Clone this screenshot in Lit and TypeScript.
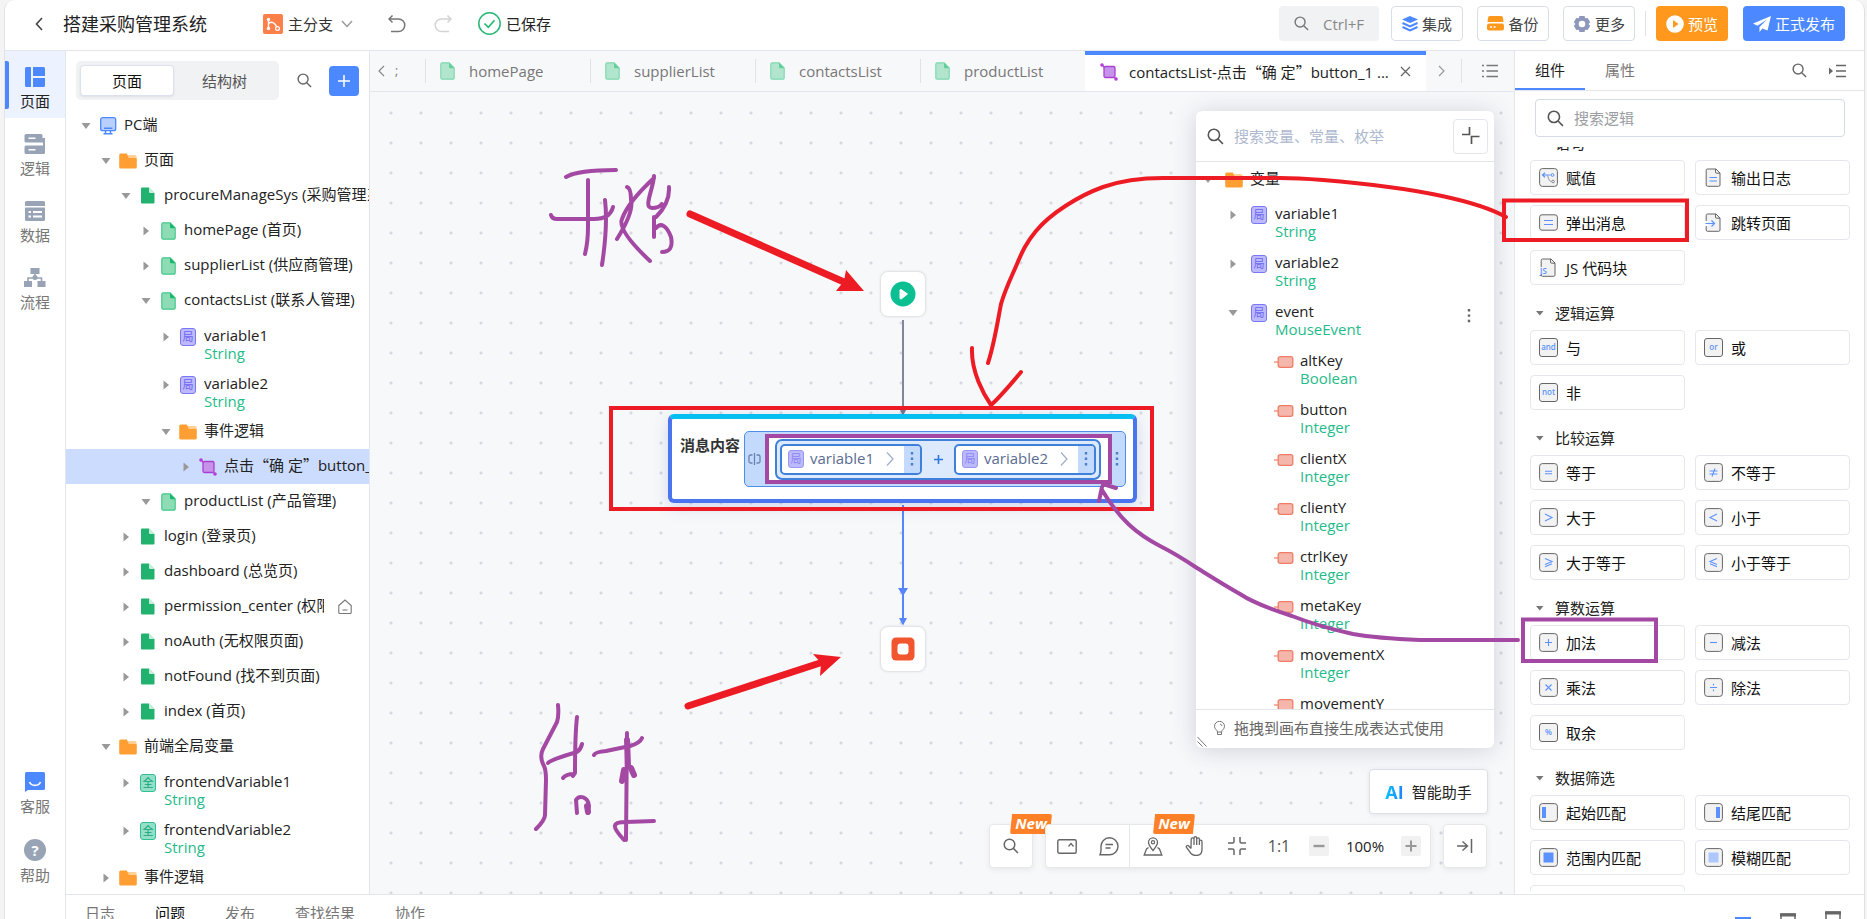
import { LitElement, html, css, svg, nothing, TemplateResult } from "lit";
import { customElement } from "lit/decorators.js";

type Row = { level: number; open?: boolean; leaf?: boolean; icon: string; text: any; type?: string; selected?: boolean; home?: boolean; menu?: boolean };

const quoted = (before: string, inner: string, after: string) =>
  html`${before}<span class="cjk open">“</span>${inner}<span class="cjk">”</span>${after}`;

const pageTree: Row[] = [
  { level: 0, open: true, icon: "pc", text: "PC端" },
  { level: 1, open: true, icon: "folder", text: "页面" },
  { level: 2, open: true, icon: "page", text: "procureManageSys (采购管理系统)" },
  { level: 3, icon: "view", text: "homePage (首页)" },
  { level: 3, icon: "view", text: "supplierList (供应商管理)" },
  { level: 3, open: true, icon: "view", text: "contactsList (联系人管理)" },
  { level: 4, icon: "local", text: "variable1", type: "String" },
  { level: 4, icon: "local", text: "variable2", type: "String" },
  { level: 4, open: true, icon: "folder", text: "事件逻辑" },
  { level: 5, icon: "logic", text: quoted("点击", "确 定", "button_1"), selected: true },
  { level: 3, open: true, icon: "view", text: "productList (产品管理)" },
  { level: 2, icon: "page", text: "login (登录页)" },
  { level: 2, icon: "page", text: "dashboard (总览页)" },
  { level: 2, icon: "page", text: "permission_center (权限中心)", home: true },
  { level: 2, icon: "page", text: "noAuth (无权限页面)" },
  { level: 2, icon: "page", text: "notFound (找不到页面)" },
  { level: 2, icon: "page", text: "index (首页)" },
  { level: 1, open: true, icon: "folder", text: "前端全局变量" },
  { level: 2, icon: "global", text: "frontendVariable1", type: "String" },
  { level: 2, icon: "global", text: "frontendVariable2", type: "String" },
  { level: 1, icon: "folder", text: "事件逻辑" },
];

const variableTree: Row[] = [
  { level: 0, open: true, icon: "folder", text: "变量" },
  { level: 1, icon: "local", text: "variable1", type: "String" },
  { level: 1, icon: "local", text: "variable2", type: "String" },
  { level: 1, open: true, icon: "local", text: "event", type: "MouseEvent", menu: true },
  ...[["altKey", "Boolean"], ["button", "Integer"], ["clientX", "Integer"], ["clientY", "Integer"], ["ctrlKey", "Integer"],
    ["metaKey", "Integer"], ["movementX", "Integer"], ["movementY", "Integer"]].map(
    ([text, type]) => ({ level: 2, leaf: true, icon: "field", text, type })),
];

const groups: { title: string; items: [string, string][] }[] = [
  { title: "语句", items: [["assign", "赋值"], ["log", "输出日志"], ["message", "弹出消息"], ["jump", "跳转页面"], ["js", "JS 代码块"]] },
  { title: "逻辑运算", items: [["and", "与"], ["or", "或"], ["not", "非"]] },
  { title: "比较运算", items: [["eq", "等于"], ["ne", "不等于"], ["gt", "大于"], ["lt", "小于"], ["ge", "大于等于"], ["le", "小于等于"]] },
  { title: "算数运算", items: [["add", "加法"], ["sub", "减法"], ["mul", "乘法"], ["div", "除法"], ["mod", "取余"]] },
  { title: "数据筛选", items: [["start", "起始匹配"], ["end", "结尾匹配"], ["range", "范围内匹配"], ["fuzzy", "模糊匹配"], ["blank", ""]] },
];

const icon = (w: number, h: number, body: TemplateResult | any) =>
  html`<svg width=${w} height=${h} viewBox="0 0 ${w} ${h}" fill="none" aria-hidden="true">${body}</svg>`;

const magnifier = (size: number, color = "#666") =>
  html`<svg width=${size} height=${size} viewBox="0 0 16 16" fill="none" stroke=${color} stroke-width="1.5" aria-hidden="true">
    <circle cx="6.5" cy="6.5" r="5.3"></circle><path d="M10.4 10.4L15 15"></path></svg>`;

const treeIcons: Record<string, () => TemplateResult> = {
  pc: () => icon(18, 18, svg`<rect x="1.7" y=".7" width="15" height="13" rx="2" fill="#b9d0ff" stroke="#4c88ff" stroke-width="1.3"/><path d="M5 11.2h8.400M6.500 14v2M11.500 14v2M4.500 16.700h9" stroke="#4c88ff" stroke-width="1.400"/>`),
  folder: () => icon(18, 16, svg`<path d="M8 2h8a1.600 1.600 0 0 1 1.600 1.600V8H8z" fill="#ffcf94"/><path d="M1.600.5h6.200l2 4.500h6.600A1.400 1.400 0 0 1 17.800 6.400v7.600a1.500 1.500 0 0 1-1.500 1.500H1.700A1.500 1.500 0 0 1 .2 14V2A1.500 1.500 0 0 1 1.600.5z" fill="#ff9f33"/>`),
  page: () => icon(14, 17, svg`<path d="M1 .5h7l5.500 5.500v9.500a1 1 0 0 1-1 1H1a1 1 0 0 1-1-1v-14a1 1 0 0 1 1-1z" fill="#22b26f"/><path d="M8 .5L13.500 6H9a1 1 0 0 1-1-1z" fill="#c9eedb"/>`),
  view: () => icon(15, 18, svg`<path d="M2.200.8h7L14.200 6v9.800a1.400 1.400 0 0 1-1.400 1.400H2.200A1.400 1.400 0 0 1 .8 15.800V2.200A1.400 1.400 0 0 1 2.200.8z" fill="#8ddcb6" stroke="#45c88a" stroke-width="1.200"/><path d="M9 .8v4a1.500 1.500 0 0 0 1.500 1.500h3.700z" fill="#14b866"/>`),
  logic: () => icon(18, 18, svg`<rect x="4" y="3.500" width="11" height="11" rx="1.500" fill="#c692ea" stroke="#a93fd4" stroke-width="1.300"/><path d="M2 2l2.500 2.500M14.500 14.500L16.500 16.500" stroke="#a93fd4" stroke-width="1.300"/><circle cx="2" cy="2" r="1.800" fill="#b43fd8"/><circle cx="16" cy="16" r="1.800" fill="#b43fd8"/>`),
  field: () => icon(20, 12, svg`<path d="M0 6h5" stroke="#f3866e" stroke-width="1.300"/><rect x="4.200" y=".7" width="14.600" height="10.600" rx="2" fill="#f5b6ac" stroke="#ee7d66" stroke-width="1.300"/>`),
  local: () => html`<span class="badge">局</span>`,
  global: () => html`<span class="badge green">全</span>`,
};

const frame = (body: any) => icon(19, 19, svg`<rect x=".6" y=".6" width="17.800" height="17.800" rx="2.800" fill="#f2f2f2" stroke="#666"/>${body}`);
const stroke = (d: string) => frame(svg`<path d=${d} stroke="#5b92ff" stroke-width="1.100"/>`);
const sheet = (body: any) => icon(19, 19, svg`<path d="M3.500 1h8.500l4 4v12a1.300 1.300 0 0 1-1.300 1.300H3.500A1.300 1.300 0 0 1 2.200 17V2.300A1.300 1.300 0 0 1 3.500 1z" fill="#f2f2f2" stroke="#666"/><path d="M11.500 1v3a1.200 1.200 0 0 0 1.200 1.200H16" stroke="#666"/>${body}`);
const word = (text: string) => html`<span class="word">${text}</span>`;

const opIcons: Record<string, () => TemplateResult> = {
  assign: () => frame(svg`<path d="M3.500 7h8M6 4.700L3.500 7 6 9.300" stroke="#5b92ff" stroke-width="1.200"/><circle cx="13.500" cy="7" r="1.400" stroke="#5b92ff"/><path d="M8 7.500c1.200 0 1.500 6 4.500 6" stroke="#888"/><circle cx="14" cy="13.500" r="1.300" stroke="#888"/>`),
  log: () => sheet(svg`<path d="M5.500 9.500h7.500M5.500 13h7.500" stroke="#5b92ff" stroke-width="1.200"/>`),
  message: () => icon(19, 19, svg`<rect x=".6" y="1.800" width="17.800" height="15.400" rx="2.400" fill="#f2f2f2" stroke="#666"/><path d="M5 7.500h9M5 11.500h9" stroke="#5b92ff" stroke-width="1.200"/>`),
  jump: () => sheet(svg`<path d="M1 8h3v5H1z" fill="#fff"/><path d="M1.500 10.500h9M7.500 7.500l3 3-3 3" stroke="#5b92ff" stroke-width="1.200"/>`),
  js: () => html`<span class="jsicon">${sheet(svg`<path d="M1 9h9.500v7H1z" fill="#f2f2f2"/>`)}<span>JS</span></span>`,
  and: () => word("and"),
  or: () => word("or"),
  not: () => word("not"),
  eq: () => stroke("M6 8.200h7M6 10.800h7"),
  ne: () => stroke("M5.500 8h8M5.500 11h8M11 5.500l-3 8"),
  gt: () => stroke("M6 6l7 3.500-7 3.500"),
  lt: () => stroke("M13 6l-7 3.500 7 3.500"),
  ge: () => stroke("M6 5.500l7 3-7 3M13 10.800l-7 3"),
  le: () => stroke("M13 5.500l-7 3 7 3M6 10.800l7 3"),
  add: () => stroke("M6 9.500h7M9.500 6v7"),
  sub: () => stroke("M6 9.500h7"),
  mul: () => stroke("M6.500 6.500l6 6M12.500 6.500l-6 6"),
  div: () => stroke("M6 9.500h7M9.500 5.800v1.600M9.500 11.600v1.600"),
  mod: () => word("%"),
  start: () => frame(svg`<rect x="3" y="4" width="4" height="11" fill="#5b92ff"/>`),
  end: () => frame(svg`<rect x="12" y="4" width="4" height="11" fill="#5b92ff"/>`),
  range: () => frame(svg`<rect x="4.500" y="4.500" width="10" height="10" fill="#5b92ff"/>`),
  fuzzy: () => frame(svg`<rect x="4.500" y="4.500" width="10" height="10" fill="#adc8ff"/>`),
  blank: () => frame(nothing),
};

const shared = css`
  * { box-sizing: border-box; }
  button, input { font: inherit; color: inherit; }
  button { background: none; border: 0; padding: 0; margin: 0; display: inline-flex; align-items: center; justify-content: center; cursor: pointer; white-space: nowrap; }
  input { border: 0; outline: 0; background: none; padding: 0; min-width: 0; }
  svg { display: block; flex: none; }
  .cjk { font-family: "Noto Sans CJK SC", sans-serif; display: inline-block; width: 15px; line-height: 18px; text-align: left; }
  .cjk.open { text-align: right; }
  .badge { display: inline-flex; align-items: center; justify-content: center; width: 16px; height: 18px; border: 1px solid #7b78f5; border-radius: 3px; background: #bcbafc; color: #6c66f0; font-size: 11px; line-height: 16px; flex: none; }
  .badge.green { border-color: #2fbf92; background: #93dfc8; color: #15a378; }
`;

@customElement("tree-view")
class TreeView extends LitElement {
  static properties = { rows: { attribute: false }, step: { type: Number }, inset: { type: Number } };
  declare rows: Row[];
  declare step: number;
  declare inset: number;
  static styles = [shared, css`
    :host { display: block; overflow: hidden; }
    .row { display: flex; align-items: center; height: 35px; line-height: 18px; white-space: nowrap; color: #222; }
    .row.typed { height: 48px; align-items: flex-start; padding-top: 8px; }
    .row.selected { background: #ccdcff; }
    .arrow { width: 16px; height: 22px; display: flex; align-items: center; justify-content: center; margin-right: 4px; flex: none; }
    .pic { width: 20px; height: 22px; display: flex; align-items: center; justify-content: center; margin-right: 6px; flex: none; }
    .label { overflow: hidden; flex: 1; padding-bottom: 4px; }
    .type { display: block; color: #1fbb8b; }
    .home { margin: 0 17px 0 14px; }
    .menu { margin: 6px 23px 0 0; }
    :host([wide]) .row.typed { height: 49px; padding-top: 7px; }
    :host([wide]) .arrow { margin-right: 8px; }
  `];
  render() {
    return this.rows.map((r) => html`
      <div class="row ${r.type ? "typed" : ""} ${r.selected ? "selected" : ""}" style="padding-left:${this.inset + this.step * r.level}px">
        <span class="arrow">${r.leaf ? nothing : r.open
          ? icon(10, 6, svg`<path d="M.5 0h9L5 6z" fill="#999"/>`)
          : icon(6, 10, svg`<path d="M.5.5v9L6 5z" fill="#999"/>`)}</span>
        <span class="pic">${treeIcons[r.icon]()}</span>
        <span class="label">${r.text}${r.type ? html`<span class="type">${r.type}</span>` : nothing}</span>
        ${r.home ? html`<span class="home">${icon(14, 15, svg`<path d="M.8 6.500L7 1l6.200 5.500v7a1 1 0 0 1-1 1H1.800a1 1 0 0 1-1-1zM4.500 11h5" stroke="#777" stroke-width="1.100"/>`)}</span>` : nothing}
        ${r.menu ? html`<span class="menu">${icon(4, 16, svg`<path d="M.8 1h2.400v2.400H.8zM.8 6.400h2.400v2.400H.8zM.8 11.800h2.400v2.400H.8z" fill="#666"/>`)}</span>` : nothing}
      </div>`);
  }
}

@customElement("component-panel")
class ComponentPanel extends LitElement {
  static styles = [shared, css`
    :host { display: flex; flex-direction: column; width: 350px; border-left: 1px solid #e3e6ed; background: #fff; min-height: 0; flex: none; }
    .tabs { display: flex; align-items: stretch; height: 40px; border-bottom: 1px solid #e3e6ed; flex: none; }
    .tab { width: 70px; color: #777; border-bottom: 2px solid transparent; }
    .tab.on { color: #222; border-color: #4c88ff; }
    .tools { margin-left: auto; display: flex; align-items: center; gap: 22px; padding-right: 17px; }
    .search { margin: 8px 19px 10px 20px; height: 38px; border: 1px solid #d5dae5; border-radius: 4px; display: flex; align-items: center; gap: 10px; padding: 0 11px; flex: none; }
    .search input { flex: 1; }
    .search input::placeholder { color: #9a9da3; opacity: 1; }
    .list { overflow-y: auto; scrollbar-width: none; flex: 1; min-height: 0; padding: 0 14px 20px 15px; margin-bottom: 3px; }
    h3 { margin: 0; font-weight: 400; font-size: 15px; line-height: 20px; height: 45px; padding: 18px 0 0 6px; display: flex; gap: 11px; color: #222; }
    h3 svg { margin-top: 8px; }
    .grid { display: grid; grid-template-columns: 1fr 1fr; gap: 10px; }
    .item { height: 35px; border: 1px solid #e5e7ed; border-radius: 4px; justify-content: flex-start; gap: 8px; padding-left: 8px; color: #111; background: #fff; }
    .word { width: 19px; height: 19px; border: 1px solid #666; border-radius: 3px; background: #f2f2f2; color: #5b92ff; font-size: 8px; font-weight: 600; line-height: 16px; text-align: center; display: inline-block; }
    .jsicon { position: relative; }
    .jsicon span { position: absolute; left: 1px; bottom: 1px; font-size: 8px; line-height: 10px; font-weight: 600; color: #5b92ff; }
  `];
  firstUpdated() {
    this.renderRoot.querySelector(".list")!.scrollTop = 32;
  }
  render() {
    return html`
      <div class="tabs">
        <button class="tab on">组件</button><button class="tab">属性</button>
        <span class="tools">
          <button aria-label="搜索">${magnifier(15)}</button>
          <button aria-label="收起">${icon(18, 14, svg`<path d="M0 3.500v7L4 7z" fill="#666"/><path d="M7 1.500h10M7 7h10M7 12.500h10" stroke="#666" stroke-width="1.400"/>`)}</button>
        </span>
      </div>
      <label class="search">${magnifier(17, "#555")}<input placeholder="搜索逻辑" aria-label="搜索逻辑"></label>
      <div class="list">${groups.map((g) => html`
        <h3>${icon(8, 5, svg`<path d="M0 0h7.500L3.800 4.500z" fill="#777"/>`)}${g.title}</h3>
        <div class="grid">${g.items.map(([k, t]) => html`<button class="item">${opIcons[k]()}${t}</button>`)}</div>`)}
      </div>`;
  }
}

@customElement("variable-panel")
class VariablePanel extends LitElement {
  static styles = [shared, css`
    :host { display: flex; flex-direction: column; background: #fff; border-radius: 6px; box-shadow: 0 2px 24px rgba(50, 60, 90, .2); overflow: hidden; }
    .head { display: flex; align-items: center; height: 51px; border-bottom: 1px solid #e3e6ed; padding: 0 6px 0 11px; gap: 10px; flex: none; }
    .head label { display: flex; align-items: center; gap: 10px; flex: 1; }
    .head input { flex: 1; }
    .head input::placeholder { color: #aeb9cf; opacity: 1; }
    .head button { width: 35px; height: 35px; border: 1px solid #e3e6ed; border-radius: 4px; }
    tree-view { flex: 1; min-height: 0; }
    .foot { height: 39px; border-top: 1px solid #e3e6ed; display: flex; align-items: center; gap: 9px; padding: 0 0 2px 18px; color: #666; position: relative; flex: none; }
    .grip { position: absolute; left: 1px; bottom: 1px; }
  `];
  render() {
    return html`
      <div class="head">
        <label>${magnifier(17, "#555")}<input placeholder="搜索变量、常量、枚举" aria-label="搜索变量"></label>
        <button aria-label="折叠">${icon(18, 18, svg`<path d="M0 7.500h7.500V0M17.500 9.500H9.500V17" stroke="#555" stroke-width="1.700"/>`)}</button>
      </div>
      <tree-view wide .rows=${variableTree} .step=${25} .inset=${4}></tree-view>
      <div class="foot">${icon(11, 15, svg`<path d="M3.500 11c0-2-3-2.600-3-5.700a5 5 0 0 1 10 0C10.500 8.400 7.500 9 7.500 11zM3.500 11v2.500h4V11M6 3a2.500 2.500 0 0 1 2 2" stroke="#777"/>`)}<span>拖拽到画布直接生成表达式使用</span>
        <span class="grip">${icon(10, 10, svg`<path d="M.5 0l9 9.500M.5 4.500l5 5" stroke="#777"/>`)}</span></div>`;
  }
}

const dots = () => icon(4, 16, svg`<path d="M.8 1h2.400v2.400H.8zM.8 6.500h2.400v2.400H.8zM.8 12h2.400v2.400H.8z" fill="#4d7dc4"/>`);

@customElement("logic-canvas")
class LogicCanvas extends LitElement {
  static styles = [shared, css`
    :host { display: block; position: relative; flex: 1; min-height: 0; overflow: hidden; background-color: #f7f8fa; background-image: radial-gradient(circle, #d6d9df 1px, transparent 2px); background-size: 30px 30px; background-position: 6px 6px; }
    .node { position: absolute; left: 510px; width: 46px; height: 46px; background: #fff; border: 1px solid #e2e4e8; border-radius: 8px; box-shadow: 0 0 3px rgba(0, 0, 0, .08); display: flex; align-items: center; justify-content: center; }
    .start { top: 179px; }
    .stop { top: 534px; }
    .wires { position: absolute; left: 518px; top: 226px; }
    .message { position: absolute; left: 298px; top: 322px; width: 469px; height: 89px; border: 4px solid #4b75ee; border-top: 5px solid #05bff2; border-radius: 6px; background: #fff; box-shadow: 0 4px 16px rgba(60, 90, 180, .2); display: flex; align-items: flex-start; padding: 12px 7px 0 8px; gap: 4px; }
    .message b { color: #333; line-height: 28px; font-weight: 700; white-space: nowrap; }
    .slot { flex: 1; display: flex; align-items: center; height: 56px; border: 1px solid #4d8fe8; border-radius: 5px; background: #c3dafd; padding: 0 6px 0 3px; gap: 4px; }
    .value { flex: 1; display: flex; align-items: center; height: 48px; background: #fff; padding: 0 10px; }
    .expr { flex: 1; display: flex; align-items: center; justify-content: space-between; height: 41px; border: 2px solid #3f80da; border-radius: 7px; background: #dde9fd; padding: 0 3px; color: #2f78e0; }
    .pill { display: flex; align-items: center; height: 31px; width: 142px; border: 2px solid #3f80da; border-radius: 5px; background: #fff; color: #5a6c90; padding-left: 6px; overflow: hidden; }
    .pill .badge { border-color: #9a96f7; color: #8b86f3; }
    .pill em { font-style: normal; flex: 1; margin-left: 6px; padding-bottom: 3px; }
    .pill .more { width: 16px; height: 31px; margin-left: 10px; background: #c3dafd; display: flex; align-items: center; justify-content: center; }
    variable-panel { position: absolute; right: 20px; top: 19px; width: 298px; height: 637px; }
    .ai { position: absolute; right: 26px; bottom: 80px; width: 119px; height: 45px; background: #fff; border: 1px solid #dcdfe5; border-radius: 4px; gap: 8px; box-shadow: 0 1px 5px rgba(0, 0, 0, .08); color: #222; }
    .ai strong { font-size: 18px; background: linear-gradient(90deg, #05c4ff, #1f80ff); -webkit-background-clip: text; color: transparent; }
    .tools { position: absolute; right: 27px; bottom: 26px; display: flex; gap: 12px; }
    .box { position: relative; display: flex; align-items: center; height: 44px; background: #fff; border: 1px solid #e6e8ec; border-radius: 4px; box-shadow: 0 2px 6px rgba(0, 0, 0, .07); color: #555; }
    .box > button { height: 100%; width: 42px; }
    .box .rule { border-right: 1px solid #e3e6ed; margin-right: 2px; }
    .box > .zoom { width: 20px; height: 20px; background: #f1f1f2; border-radius: 2px; margin: 0 9px; }
    .box output { color: #222; width: 54px; text-align: center; }
    .box .ratio { font-size: 16px; }
    .new { position: absolute; top: -11px; width: 42px; height: 20px; background: #ff8026; border-radius: 2px; color: #fff; font-weight: 700; font-style: italic; font-size: 15px; line-height: 19px; text-align: center; clip-path: polygon(5% 0, 100% 0, 95% 100%, 0 100%); }
    .new.a { left: 20px; }
    .new.b { left: 107px; }
  `];
  pill(name: string) {
    return html`<span class="pill"><span class="badge">局</span><em>${name}</em>
      ${icon(8, 14, svg`<path d="M1 .5l6 6.500-6 6.500" stroke="#9fb0cf" stroke-width="1.300"/>`)}
      <span class="more">${dots()}</span></span>`;
  }
  render() {
    const g = "#666";
    return html`
      <div class="wires">${icon(30, 310, svg`<path d="M15 2v92" stroke="#7f8799" stroke-width="2"/><path d="M12 92h6l-3 6z" fill="#6f788a"/>
        <path d="M15 187v116" stroke="#5585ff" stroke-width="2"/><path d="M10 270h10l-5 8zM11 300h8l-4 7.500z" fill="#5585ff"/>`)}</div>
      <div class="node start">${icon(26, 26, svg`<circle cx="13" cy="13" r="12.500" fill="#0bbf92"/><path d="M10 9v8.500l1 .6L17.500 13 11 8.500z" fill="#fff" stroke="#fff" stroke-linejoin="round"/>`)}</div>
      <div class="message"><b>消息内容</b>
        <div class="slot">
          ${icon(13, 14, svg`<path d="M4.500 3H2.500a1.500 1.500 0 0 0-1.500 1.500v5A1.500 1.500 0 0 0 2.500 11h2M8.500 3h2A1.500 1.500 0 0 1 12 4.500v5a1.500 1.500 0 0 1-1.500 1.500h-2M6.500 1v12" stroke="#6a83ad" stroke-width="1.300"/>`)}
          <div class="value"><div class="expr">${this.pill("variable1")}${icon(9, 9, svg`<path d="M0 4.500h9M4.500 0v9" stroke="#2f78e0" stroke-width="1.600"/>`)}${this.pill("variable2")}</div></div>
          ${dots()}
        </div>
      </div>
      <div class="node stop">${icon(24, 24, svg`<rect x=".5" y=".5" width="23" height="23" rx="4.500" fill="#f2562f"/><rect x="6.500" y="6.500" width="11" height="11" rx="3" fill="#fff"/>`)}</div>
      <variable-panel></variable-panel>
      <button class="ai"><strong>AI</strong>智能助手</button>
      <div class="tools">
        <div class="box"><button aria-label="搜索">${magnifier(16)}</button><span class="new a">New</span></div>
        <div class="box">
          <button aria-label="画布">${icon(20, 15, svg`<rect x=".8" y=".8" width="18.400" height="13.400" rx="1.500" stroke=${g} stroke-width="1.400"/><path d="M11.500 7.500L14 4.500l2.500 3" stroke=${g} stroke-width="1.200"/>`)}</button>
          <button class="rule" aria-label="评论">${icon(20, 19, svg`<path d="M1 17.800h9.500A8.500 8.500 0 1 0 2 9.500c0 3.500.5 5-1 8.300zM6.500 7.500h7.500M6.500 11h5" stroke=${g} stroke-width="1.400"/>`)}</button>
          <button aria-label="定位">${icon(20, 20, svg`<path d="M10 14.500c-2.500-3-4.500-5.200-4.500-8.200a4.500 4.500 0 0 1 9 0c0 3-2 5.200-4.500 8.200zM5.500 11.500L3.500 13l-2.300 6h17.600l-2.300-6-2-1.500" stroke=${g} stroke-width="1.300"/><circle cx="10" cy="6.200" r="1.600" stroke=${g} stroke-width="1.200"/>`)}</button>
          <button aria-label="拖动">${icon(20, 20, svg`<path d="M6 12.500L3.500 9.800a1.300 1.300 0 0 0-2 1.600L6 17.500c1.200 1.500 2.500 2 5 2 4.200 0 6-2.500 6-6V5.500a1.300 1.300 0 0 0-2.600 0V9M14.400 9V3.200a1.300 1.300 0 0 0-2.700 0V9M11.700 9V2a1.300 1.300 0 0 0-2.700 0v7M9 9V3.200a1.400 1.400 0 0 0-2.800 0L6 12.500" stroke=${g} stroke-width="1.300"/>`)}</button>
          <button aria-label="适应">${icon(18, 18, svg`<path d="M0 6h4.500A1.500 1.500 0 0 0 6 4.500V0M12 0v4.500A1.500 1.500 0 0 0 13.500 6H18M18 12h-4.500a1.500 1.500 0 0 0-1.500 1.500V18M6 18v-4.500A1.500 1.500 0 0 0 4.500 12H0" stroke=${g} stroke-width="1.500"/>`)}</button>
          <button class="ratio">1:1</button>
          <button class="zoom" aria-label="缩小">${icon(12, 12, svg`<path d="M.5 6h11" stroke="#999" stroke-width="2.400"/>`)}</button>
          <output>100%</output>
          <button class="zoom" aria-label="放大">${icon(12, 12, svg`<path d="M.5 6h11M6 .5v11" stroke="#999" stroke-width="2"/>`)}</button>
          <span class="new b">New</span>
        </div>
        <div class="box"><button aria-label="收起面板">${icon(16, 14, svg`<path d="M0 7h10M5.500 2.500L10.500 7l-5 4.500M14.500 0v14" stroke=${g} stroke-width="1.500"/>`)}</button></div>
      </div>`;
  }
}

const navIcons: Record<string, () => TemplateResult> = {
  pages: () => icon(20, 20, svg`<path d="M0 1.500A1.500 1.500 0 0 1 1.500 0H6v20H1.500A1.500 1.500 0 0 1 0 18.500zM8 0h10.500A1.500 1.500 0 0 1 20 1.500V9H8zM8 11h12v7.500a1.500 1.500 0 0 1-1.500 1.500H8z" fill="#4c88ff"/>`),
  logic: () => icon(22, 20, svg`<path d="M2 0h15a1.500 1.500 0 0 1 1.500 1.500V4H21v9h-2V8.500H2A1.500 1.500 0 0 1 .5 7V1.500A1.500 1.500 0 0 1 2 0zM2 11.500h17.500A1.500 1.500 0 0 1 21 13v5.500a1.500 1.500 0 0 1-1.500 1.500H2a1.500 1.500 0 0 1-1.500-1.500V13A1.500 1.500 0 0 1 2 11.500z" fill="#98a4b5"/><path d="M4.500 4.200h7M4.500 15.800h7" stroke="#fff" stroke-width="1.600"/>`),
  data: () => icon(20, 20, svg`<path d="M0 5V1.500A1.500 1.500 0 0 1 1.500 0h17A1.500 1.500 0 0 1 20 1.500V5zM0 6.500h20v12a1.500 1.500 0 0 1-1.500 1.500h-17A1.500 1.500 0 0 1 0 18.500z" fill="#98a4b5"/><path d="M3.500 11h2.500M8 11h9M3.500 15.500h2.500M8 15.500h9" stroke="#fff" stroke-width="1.800"/>`),
  flow: () => icon(22, 20, svg`<path d="M6.500 0h9v6h-9zM0 13h8v6H0zM13.500 13h8v6h-8z" fill="#98a4b5"/><path d="M11 6v5M4 13v-3h13.500v3" stroke="#98a4b5" stroke-width="1.600"/><circle cx="11" cy="9.500" r="2.500" fill="#98a4b5"/>`),
  service: () => icon(20, 20, svg`<path d="M1.500 0h17A1.500 1.500 0 0 1 20 1.500v15a1.500 1.500 0 0 1-1.500 1.500H3l-3 2V1.500A1.500 1.500 0 0 1 1.500 0z" fill="#4c88ff"/><path d="M4.500 10c2 4.500 9 4.500 11 0" stroke="#fff" stroke-width="1.600"/>`),
  help: () => html`<span class="help">?</span>`,
};

@customElement("app-root")
class AppRoot extends LitElement {
  static styles = [shared, css`
    :host { display: block; position: relative; height: 100vh; overflow: hidden; padding: 0 2px 0 4px; background: #f4f4f5; font-family: "Open Sans", "Noto Sans CJK SC", sans-serif; font-size: 15px; line-height: 20px; color: #222; }
    .shell { height: 100%; display: flex; flex-direction: column; background: #fff; border-left: 1px solid #e3e4e6; border-right: 1px solid #e0e0e2; border-radius: 10px 10px 0 0; }
    header { display: flex; align-items: center; height: 51px; border-bottom: 1px solid #e3e6ed; padding: 0 19px 3px 30px; flex: none; }
    h1 { font-size: 18px; font-weight: 400; margin: 0 56px 0 20px; white-space: nowrap; }
    .branch { gap: 5px; margin-right: 35px; color: #333; }
    .branch svg:last-child { margin-left: 3px; }
    .undo { margin-right: 28px; }
    .saved { display: flex; align-items: center; gap: 5px; margin-left: 26px; white-space: nowrap; }
    .actions { margin-left: auto; display: flex; align-items: center; }
    .actions button { height: 35px; border-radius: 4px; width: 72px; gap: 4px; color: #444; }
    .actions .find { width: 100px; background: #f1f2f4; gap: 14px; color: #888; margin-right: 12px; }
    .actions .plain { border: 1px solid #d9dde8; margin-right: 14px; }
    .actions .plain.last { margin: 0 10px 0 0; }
    .actions .bar { width: 1px; height: 25px; background: #dfe2e8; margin-right: 10px; }
    .actions .preview { background: #ff981c; color: #fff; margin-right: 15px; }
    .actions .publish { background: #4c88ff; color: #fff; width: 102px; }
    .body { display: flex; flex: 1; min-height: 0; }
    nav { width: 61px; border-right: 1px solid #e3e6ed; display: flex; flex-direction: column; padding-bottom: 29px; flex: none; }
    nav a { display: flex; flex-direction: column; align-items: center; gap: 4px; padding-top: 16px; height: 67px; color: #777; text-decoration: none; flex: none; position: relative; line-height: 20px; }
    nav a.on { background: #ecf2ff; color: #222; }
    nav a.on::before { content: ""; position: absolute; left: 0; top: 10px; width: 4px; height: 48px; background: #4c88ff; border-radius: 0 2px 2px 0; }
    nav .push { margin-top: auto; }
    .help { width: 22px; height: 22px; border-radius: 50%; background: #98a4b5; color: #fff; font-weight: 700; text-align: center; line-height: 22px; }
    .work { flex: 1; min-width: 0; display: flex; flex-direction: column; }
    .upper { flex: 1; min-height: 0; display: flex; }
    .side { width: 304px; border-right: 1px solid #e3e6ed; display: flex; flex-direction: column; flex: none; }
    .side tree-view { flex: 1; min-height: 0; }
    .switch { display: flex; align-items: center; padding: 10px 10px 8px; height: 57px; flex: none; }
    .seg { display: flex; width: 203px; height: 39px; background: #f1f2f4; border-radius: 5px; padding: 4px; margin-right: 18px; }
    .seg button { flex: 1; color: #555; border-radius: 4px; }
    .seg .on { flex: none; width: 94px; background: #fff; color: #111; border: 1px solid #dde1ec; box-shadow: 0 1px 2px rgba(80, 90, 130, .12); }
    .add { width: 30px; height: 30px; border-radius: 4px; background: #4c88ff; margin-left: auto; }
    .center { flex: 1; min-width: 0; display: flex; flex-direction: column; }
    .files { display: flex; height: 41px; background: #f7f8fa; border-bottom: 1px solid #e3e6ed; flex: none; color: #777; }
    .files .prev { width: 55px; justify-content: flex-start; gap: 10px; padding-left: 8px; font-size: 12px; }
    .files .tab { width: 165px; justify-content: flex-start; gap: 14px; padding-left: 15px; position: relative; }
    .files .tab::before, .files .all::before { content: ""; position: absolute; left: 0; top: 8px; height: 24px; width: 1px; background: #dfe2e8; }
    .files .tab svg { opacity: .65; }
    .files .current { flex: 0 1 341px; min-width: 0; background: #fff; color: #222; border-top: 4px solid #4c88ff; justify-content: flex-start; padding: 0 15px 3px 15px; gap: 11px; }
    .files .current svg:last-child { margin-left: auto; }
    .files .next { width: 35px; padding-right: 5px; }
    .files .all { margin-left: auto; width: 53px; padding-left: 5px; position: relative; }
    footer { height: 25px; border-top: 1px solid #e3e6ed; display: flex; gap: 40px; padding: 8px 23px 0 19px; flex: none; overflow: hidden; color: #777; align-items: flex-start; }
    footer .on { color: #111; }
    .wins { margin-left: auto; display: flex; gap: 29px; align-items: flex-start; }
    .marks { position: absolute; left: 0; top: 0; pointer-events: none; }
  `];
  render() {
    return html`
      <div class="shell">
        <header>
          <button aria-label="返回">${icon(8, 14, svg`<path d="M7 1L1.500 7 7 13" stroke="#444" stroke-width="1.600"/>`)}</button>
          <h1>搭建采购管理系统</h1>
          <button class="branch">${icon(20, 20, svg`<rect width="20" height="20" rx="2" fill="#ff7f4a"/><path d="M5.500 5v10M5.500 10c2-3 7-2 8.500 4.500M5.500 14" stroke="#fff" stroke-width="1.400"/><circle cx="5.500" cy="5.500" r="1.700" fill="#fff"/><circle cx="5.500" cy="14.500" r="1.700" fill="#fff"/><circle cx="14.500" cy="14.500" r="1.900" fill="#ff7f4a" stroke="#fff" stroke-width="1.200"/>`)}主分支${icon(12, 8, svg`<path d="M1 1l5 5.500L11 1" stroke="#999" stroke-width="1.400"/>`)}</button>
          <button class="undo" aria-label="撤销">${icon(18, 18, svg`<path d="M1 4h9.500a6.200 6.200 0 0 1 0 12.500H3M4.500.5L1 4l3.500 3.500" stroke="#777" stroke-width="1.500"/>`)}</button>
          <button aria-label="重做">${icon(18, 18, svg`<path d="M17 4H7.500a6.200 6.200 0 0 0 0 12.500H15M13.500.5L17 4l-3.500 3.500" stroke="#d3d3d3" stroke-width="1.500"/>`)}</button>
          <span class="saved">${icon(23, 23, svg`<circle cx="11.500" cy="11.500" r="10.700" stroke="#26b875" stroke-width="1.500"/><path d="M6.500 11.500l3.800 3.800 6.200-7" stroke="#26b875" stroke-width="1.700"/>`)}已保存</span>
          <div class="actions">
            <button class="find">${magnifier(15, "#777")}Ctrl+F</button>
            <button class="plain">${icon(16, 16, svg`<path d="M8 0l8 3.500L8 7 0 3.500z" fill="#4c88ff"/><path d="M.5 7L8 10.500 15.500 7M.5 11L8 14.500l7.500-3.500" stroke="#4c88ff" stroke-width="2"/>`)}集成</button>
            <button class="plain">${icon(17, 15, svg`<path d="M3 0h11a2 2 0 0 1 2 2l.5 4H.5L1 2a2 2 0 0 1 2-2z" fill="#ff981c"/><rect y="7.500" width="17" height="7" rx="2" fill="#ff981c"/><path d="M3 11h2M6.500 11h2" stroke="#fff" stroke-width="1.600"/>`)}备份</button>
            <button class="plain last">${icon(18, 18, svg`<path d="M6.500 1h5l.8 2.300 2.400-.4 2.500 4.300L15.500 9l1.700 1.800-2.500 4.300-2.400-.4L11.500 17h-5l-.8-2.300-2.400.4L.8 10.800 2.500 9 .8 7.200l2.500-4.300 2.400.4z" fill="#8f98bb"/><circle cx="9" cy="9" r="3.300" fill="#fff"/>`)}更多</button>
            <span class="bar"></span>
            <button class="preview">${icon(18, 18, svg`<circle cx="9" cy="9" r="8.800" fill="#fff"/><path d="M7 5v8l5.500-4z" fill="#ff981c"/>`)}预览</button>
            <button class="publish">${icon(18, 16, svg`<path d="M18 0L0 7.500l4.500 2.300L14 3.500 6.500 11v5l3-3.500 5 2z" fill="#fff"/>`)}正式发布</button>
          </div>
        </header>
        <div class="body">
          <nav>
            ${[["pages", "页面"], ["logic", "逻辑"], ["data", "数据"], ["flow", "流程"]].map(([k, t], i) =>
              html`<a href="#${k}" class=${i === 0 ? "on" : ""}>${navIcons[k]()}${t}</a>`)}
            <a href="#service" class="push">${navIcons.service()}客服</a>
            <a href="#help">${navIcons.help()}帮助</a>
          </nav>
          <div class="work">
            <div class="upper">
              <div class="side">
                <div class="switch">
                  <div class="seg"><button class="on">页面</button><button>结构树</button></div>
                  <button aria-label="搜索">${magnifier(15)}</button>
                  <button class="add" aria-label="新增">${icon(14, 14, svg`<path d="M1 7h12M7 1v12" stroke="#fff" stroke-width="1.500"/>`)}</button>
                </div>
                <tree-view .rows=${pageTree} .step=${20} .inset=${12}></tree-view>
              </div>
              <div class="center">
                <div class="files">
                  <button class="prev">${icon(7, 12, svg`<path d="M6 1L1 6l5 5" stroke="#888" stroke-width="1.200"/>`)};</button>
                  ${["homePage", "supplierList", "contactsList", "productList"].map((t) => html`<button class="tab">${treeIcons.view()}${t}</button>`)}
                  <button class="current">${treeIcons.logic()}<span>${quoted("contactsList-点击", "确 定", "button_1 ...")}</span>${icon(11, 11, svg`<path d="M1 1l9 9M10 1l-9 9" stroke="#666" stroke-width="1.300"/>`)}</button>
                  <button class="next" aria-label="下一个">${icon(7, 12, svg`<path d="M1 1l5 5-5 5" stroke="#999" stroke-width="1.200"/>`)}</button>
                  <button class="all" aria-label="全部标签">${icon(16, 14, svg`<path d="M4.500 1.500H16M4.500 7H16M4.500 12.500H16M0 1.500h2M0 7h2M0 12.500h2" stroke="#777" stroke-width="1.300"/>`)}</button>
                </div>
                <logic-canvas></logic-canvas>
              </div>
              <component-panel></component-panel>
            </div>
            <footer>
              <span>日志</span><span class="on">问题</span><span>发布</span><span>查找结果</span><span>协作</span>
              <span class="wins">
                ${icon(16, 17, svg`<path d="M0 15.500h16" stroke="#4c88ff" stroke-width="3"/>`)}
                ${icon(16, 17, svg`<path d="M1 17V11h14v6" stroke="#666" stroke-width="1.500"/><path d="M0 12h16" stroke="#666" stroke-width="3"/>`)}
                ${icon(16, 17, svg`<path d="M1 17V9h14v8" stroke="#666" stroke-width="1.500"/><path d="M0 10h16" stroke="#666" stroke-width="3"/>`)}
              </span>
            </footer>
          </div>
        </div>
      </div>
      <svg class="marks" width="1867" height="919" viewBox="0 0 1867 919" fill="none" stroke-linecap="round" stroke-linejoin="round" aria-hidden="true">
        <g stroke="#ed1c24" stroke-width="4">
          <path d="M611 408H1152V509H611zM1504 200.500H1687V240H1504z" stroke-linejoin="miter"></path>
          <path d="M1506 217C1490 208 1470 202 1442 196C1400 187 1360 183 1323 180C1310 179 1295 178 1280 178H1163C1140 178 1120 181 1103 187C1078 196 1050 214 1036 231C1026 243 1022 252 1017 264C1010 280 1005 290 1001 304C997 325 994 345 988 363"></path>
          <path d="M972 348C971 372 984 395 991 405C1001 396 1010 385 1021 372"></path>
          <path d="M690 214L844 282M688 706L820 663" stroke-width="7"></path>
        </g>
        <path d="M864 291L846 270L844 281L836 291zM841 657L813 654L821 663L820 676z" fill="#ed1c24"></path>
        <g stroke="#a349a4" stroke-width="4">
          <path d="M767 436H1110V482H767zM1523 619.500H1656V661H1523z" stroke-linejoin="miter"></path>
          <path d="M1518 640H1420C1395 639 1375 638 1353 634C1330 629 1310 623 1292 616C1270 609 1252 602 1240 594C1224 585 1210 576 1197 568C1185 560 1172 552 1160 546C1137 534 1120 520 1102 490M1099 501L1102 487M1103 484L1116 488"></path>
          <path d="M566 177Q578 170 616 170M588 180V227Q588 242 585 254M551 215Q552 219 557 219H594Q610 219 613 207M605 200Q608 225 602 265"></path>
          <path d="M627 187Q631 188 631 200Q634 212 617 239M654 178Q628 202 622 219Q617 230 650 261M654 176C653 190 643 208 652 208Q659 208 662 204M669 187Q670 203 656 217M654 217V237M656 228C661 222 667 226 671 237Q674 252 662 252"></path>
          <path d="M558 705Q559 716 557 722L543 749Q539 757 544 766Q546 770 546 780L545 815Q545 820 536 829M577 717Q575 735 575 773L573 776M548 763Q550 760 577 752Q581 749 582 744M563 778Q566 774 574 774"></path>
          <path d="M577 813L576 800C579 795 588 796 589 806L588 813M594 755Q595 752 606 751L630 746Q640 743 642 738M627 733L626 840M654 821L626 822C612 822 611 826 624 840"></path>
          <path d="M627 740L628 765M622 781L624 770M631 768L634 775M587 806L588 812" stroke-width="6"></path>
        </g>
      </svg>`;
  }
}
